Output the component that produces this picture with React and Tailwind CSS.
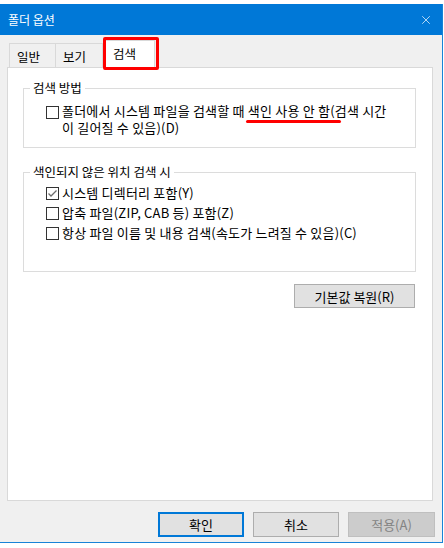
import { X } from "lucide-react";

const font = { fontFamily: '"Noto Sans CJK KR", "Noto Sans", sans-serif' };

function CheckBox({ checked }) {
  return (
    <span className="w-[13px] h-[13px] shrink-0 border border-[#333333] bg-white flex items-center justify-center">
      {checked && (
        <svg width="11" height="11" viewBox="0 0 11 11">
          <polyline points="1.5,5.5 4,8 9.5,2.5" fill="none" stroke="#6d6d6d" strokeWidth="1.3" />
        </svg>
      )}
    </span>
  );
}

function Row({ checked, children }) {
  return (
    <div className="flex items-center h-[20px] gap-[3px]">
      <CheckBox checked={checked} />
      <span className="text-[13px] leading-[16px] tracking-[0.2px] text-black whitespace-nowrap">{children}</span>
    </div>
  );
}

function Group({ title, className, children }) {
  return (
    <fieldset className={`border border-[#dcdcdc] ml-[15px] w-[393px] ${className}`}>
      <legend className="ml-[6px] px-[3px] text-[12.5px] leading-[14px] text-black">{title}</legend>
      {children}
    </fieldset>
  );
}

export default function App() {
  return (
    <div className="w-[444px] h-[548px] bg-white overflow-hidden pt-[4px]" style={font}>
      <div className="w-[443px] h-[539px] bg-[#f0f0f0] border-r border-b border-[#1883d7] flex flex-col">
        {/* title bar */}
        <div className="h-[31px] bg-[#0078d7] flex items-center justify-between pl-[8px] pr-[9px] shrink-0">
          <span className="text-white text-[12px] leading-none">폴더 옵션</span>
          <X size={14} strokeWidth={1.2} className="text-white" />
        </div>

        {/* tabs */}
        <div className="relative flex items-end h-[32px] pl-[9px] shrink-0">
          <div className="w-[47px] h-[24px] border border-b-0 border-[#d9d9d9] bg-[#f0f0f0] text-[12.5px] leading-[22px] pl-[7px] pt-[2px]">일반</div>
          <div className="w-[47px] h-[24px] border border-l-0 border-b-0 border-[#d9d9d9] bg-[#f0f0f0] text-[12.5px] leading-[22px] pl-[7px] pt-[2px]">보기</div>
          <div className="ml-[1px] w-[51px] h-[28px] border border-b-0 border-[#d9d9d9] bg-white text-[12.5px] leading-[26px] pl-[8px] relative z-10 -mb-px">검색</div>
          <div className="absolute left-[103px] top-[2px] w-[56px] h-[33px] border-[3px] border-[#ff0000] rounded-[2px] z-20" />
        </div>

        {/* panel */}
        <div className="ml-[7px] w-[426px] h-[434px] bg-white border border-[#d9d9d9] shrink-0 pt-[13px]">
          <Group title="검색 방법" className="h-[67px]">
            <div className="flex pl-[22px] pt-[7px] gap-[3px]">
              <span className="mt-[4px]"><CheckBox /></span>
              <div className="text-[13px] leading-[17px] tracking-[0.2px] text-black">
                <div className="whitespace-nowrap">
                  폴더에서 시스템 파일을 검색할 때{" "}
                  <span className="relative">
                    색인 사용 안 함
                    <span className="absolute left-[-2px] right-[-11px] top-[19px] h-[3px] rounded-full bg-[#ff0000]" />
                  </span>
                  (검색 시간
                </div>
                <div>이 길어질 수 있음)(D)</div>
              </div>
            </div>
          </Group>

          <Group title="색인되지 않은 위치 검색 시" className="h-[107px] mt-[17px]">
            <div className="pl-[22px] pt-[4px] flex flex-col">
              <Row checked>시스템 디렉터리 포함(Y)</Row>
              <Row>압축 파일(ZIP, CAB 등) 포함(Z)</Row>
              <Row>항상 파일 이름 및 내용 검색(속도가 느려질 수 있음)(C)</Row>
            </div>
          </Group>

          <div className="flex justify-end w-[407px] mt-[12px]">
            <button className="w-[121px] h-[24px] bg-[#e1e1e1] border border-[#adadad] text-[13px] leading-none text-black">
              기본값 복원(R)
            </button>
          </div>
        </div>

        {/* bottom buttons */}
        <div className="flex justify-end gap-[9px] pr-[7px] mt-[11px]">
          <button className="w-[86px] h-[25px] bg-[#e1e1e1] border-2 border-[#0078d7] text-[13px] leading-none text-black">확인</button>
          <button className="w-[86px] h-[25px] bg-[#e1e1e1] border border-[#adadad] text-[13px] leading-none text-black">취소</button>
          <button className="w-[87px] h-[25px] bg-[#cccccc] border border-[#bfbfbf] text-[13px] leading-none text-[#838383]">적용(A)</button>
        </div>
      </div>
    </div>
  );
}
